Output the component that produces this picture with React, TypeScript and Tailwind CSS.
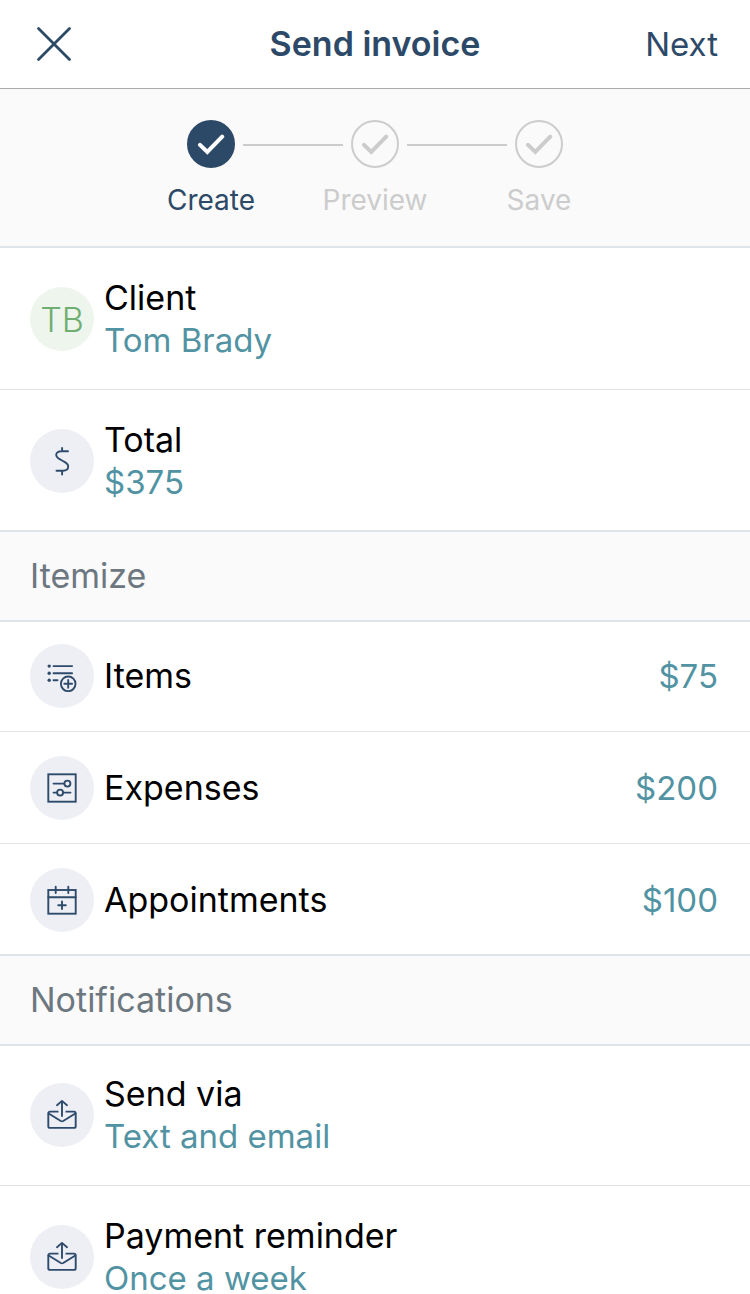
import { Fragment, type ReactNode } from "react";

type RowData = { icon: ReactNode; label: string; value: string; tint?: "green" | "gray" };

function Svg({ children }: { children: ReactNode }) {
  return (
    <svg
      className="h-8 w-8"
      viewBox="0 0 32 32"
      fill="none"
      stroke="currentColor"
      strokeWidth="1.9"
      strokeLinecap="round"
      strokeLinejoin="round"
      aria-hidden="true"
    >
      {children}
    </svg>
  );
}

const DollarIcon = () => (
  <Svg>
    <path d="M22 6.200H15.500C12.200 6.200 10.200 7.500 10.200 10C10.200 12.600 12.600 13.800 16 15.500C19.800 17.400 22.200 18.600 22.200 21.500C22.200 24.200 20 25.700 17 25.700H10.500M16.100 3V6.200M16.100 25.700V29.500" />
  </Svg>
);

const ItemsIcon = () => (
  <Svg>
    <path d="M7.500 6.100h18.600M7.500 13.200h18.600M7.500 20.300h4" />
    <g fill="currentColor" stroke="none">
      <circle cx="3.200" cy="6.100" r="1.700" />
      <circle cx="3.200" cy="13.200" r="1.700" />
      <circle cx="3.200" cy="20.300" r="1.700" />
    </g>
    <circle cx="22.200" cy="23.800" r="7.300" fill="#edeff4" />
    <path d="M22.200 19.900v7.800M18.300 23.800h7.800" />
  </Svg>
);

const ExpensesIcon = () => (
  <Svg>
    <rect x="2.300" y="2.300" width="27.400" height="27.400" strokeLinejoin="miter" />
    <path d="M7.500 11.600h10.700M7.500 20.600h3.300M17.300 20.600h7.200" />
    <circle cx="21.400" cy="11.600" r="3" />
    <circle cx="14.100" cy="20.600" r="3" />
  </Svg>
);

const CalendarIcon = () => (
  <Svg>
    <rect x="2.300" y="6" width="27.400" height="23.700" strokeLinejoin="miter" />
    <path d="M2.300 13.300h27.400M9.700 2.800v6.200M22.300 2.800v6.200M16 17.500v7.600M12.200 21.300h7.600" />
  </Svg>
);

const SendIcon = () => (
  <Svg>
    <path d="M12.500 12.600H4a1.700 1.700 0 0 0-1.700 1.700v12.900A1.700 1.700 0 0 0 4 28.900h24a1.700 1.700 0 0 0 1.700-1.700V14.300a1.700 1.700 0 0 0-1.700-1.700h-8.500" strokeLinecap="butt" />
    <path d="M2.700 14.500 14.800 22q1.200.7 2.400 0l12.100-7.500M16 17V1.900M11 6.200l5-4.300 5 4.300" />
  </Svg>
);

function Check() {
  return (
    <svg className="h-7 w-7 shrink-0" viewBox="0 0 28 28" fill="none" stroke="currentColor" strokeWidth="4" strokeLinecap="round" strokeLinejoin="miter" aria-hidden="true">
      <path d="M3 14.900l7.300 7.100L25.200 6.700" />
    </svg>
  );
}

const steps = [
  { label: "Create", active: true },
  { label: "Preview", active: false },
  { label: "Save", active: false },
];

const summary: RowData[] = [
  { icon: "TB", label: "Client", value: "Tom Brady", tint: "green" },
  { icon: <DollarIcon />, label: "Total", value: "$375" },
];
const items: RowData[] = [
  { icon: <ItemsIcon />, label: "Items", value: "$75" },
  { icon: <ExpensesIcon />, label: "Expenses", value: "$200" },
  { icon: <CalendarIcon />, label: "Appointments", value: "$100" },
];
const notifications: RowData[] = [
  { icon: <SendIcon />, label: "Send via", value: "Text and email" },
  { icon: <SendIcon />, label: "Payment reminder", value: "Once a week" },
];

function Row({ row, inline = false }: { row: RowData; inline?: boolean }) {
  return (
    <li>
      <button
        type="button"
        className={`flex w-full items-center bg-white pr-8 pl-[30px] text-left shadow-[inset_0_-1px_0_#dfe3e6] ${inline ? "h-28" : "h-[142px]"}`}
      >
        <span
          className={`mr-[10px] flex h-16 w-16 shrink-0 items-center justify-center rounded-full text-[34px] font-light ${
            row.tint === "green" ? "bg-[#edf5ed] text-[#6fae70]" : "bg-[#edeff4] text-[#2f4b6c]"
          }`}
        >
          {row.icon}
        </span>
        <span className={`flex min-w-0 grow leading-[42px] ${inline ? "justify-between" : "flex-col"}`}>
          <span className="text-[34px] text-black">{row.label}</span>
          <span className="text-[33px] text-[#5293a3]">{row.value}</span>
        </span>
      </button>
    </li>
  );
}

function Section({ title, rows, inline }: { title: string; rows: RowData[]; inline?: boolean }) {
  return (
    <section>
      <h2 className="relative -my-[2px] flex h-[92px] items-center border-y-2 border-[#dfe4e8] bg-[#fafafa] px-[30px] text-[34px] leading-[42px] text-[#6c7780]">
        {title}
      </h2>
      <ul>
        {rows.map((row) => (
          <Row key={row.label} row={row} inline={inline} />
        ))}
      </ul>
    </section>
  );
}

export default function App() {
  return (
    <div className="flex h-screen flex-col bg-white font-['Inter',sans-serif]">
      <header className="grid h-[89px] shrink-0 grid-cols-[1fr_auto_1fr] items-center border-b border-[#a9aaac] px-8 text-[#2d4968]">
        <button type="button" aria-label="Close" className="justify-self-start">
          <svg className="h-11 w-11" viewBox="0 0 44 44" fill="none" stroke="currentColor" strokeWidth="2.800" strokeLinecap="round" aria-hidden="true">
            <path d="M6.500 6.500l31 31M37.500 6.500l-31 31" />
          </svg>
        </button>
        <h1 className="text-[34px] leading-[42px] font-semibold">Send invoice</h1>
        <button type="button" className="justify-self-end text-[33px] leading-[42px]">
          Next
        </button>
      </header>

      <main className="grow overflow-y-auto [scrollbar-width:none]">
        <ol className="flex h-[159px] justify-center gap-2 border-b-2 border-[#dfe4e8] bg-[#fafafa] pt-[31px]">
          {steps.map((step, i) => (
            <Fragment key={step.label}>
              {i > 0 && <li aria-hidden="true" className="mt-6 h-[2px] w-[100px] bg-[#cccccc]" />}
              <li
                aria-current={step.active ? "step" : undefined}
                className={`flex w-12 flex-col items-center ${step.active ? "text-[#2d4968]" : "text-[#cccccc]"}`}
              >
                <span
                  className={`flex h-12 w-12 items-center justify-center rounded-full border-2 ${
                    step.active ? "border-[#2d4968] bg-[#2d4968] text-white" : "border-[#cccccc]"
                  }`}
                >
                  <Check />
                </span>
                <span className="mt-4 w-max text-[28px] leading-8">{step.label}</span>
              </li>
            </Fragment>
          ))}
        </ol>

        <ul>
          {summary.map((row) => (
            <Row key={row.label} row={row} />
          ))}
        </ul>
        <Section title="Itemize" rows={items} inline />
        <Section title="Notifications" rows={notifications} />
      </main>
    </div>
  );
}
